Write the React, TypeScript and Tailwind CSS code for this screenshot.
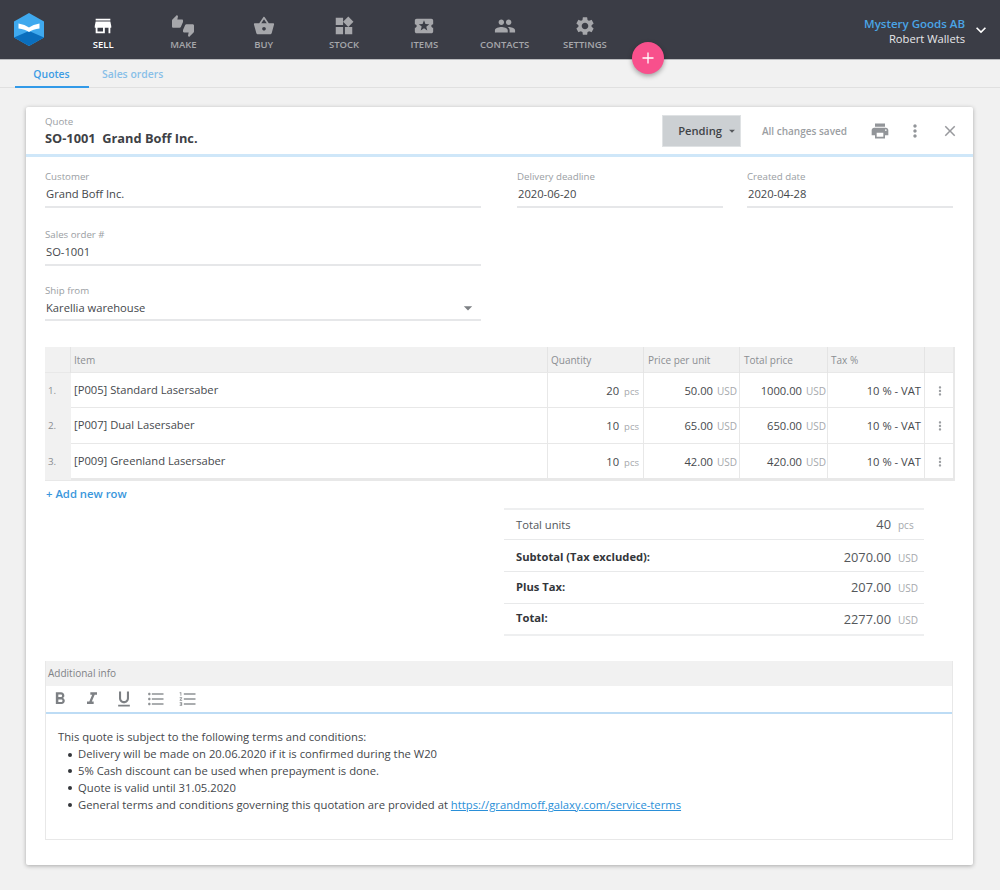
import { MdStore, MdThumbsUpDown, MdShoppingBasket, MdWidgets, MdLocalActivity, MdPeople, MdSettings, MdPrint, MdMoreVert, MdClose, MdKeyboardArrowDown, MdArrowDropDown, MdFormatBold, MdFormatItalic, MdFormatUnderlined, MdFormatListBulleted, MdFormatListNumbered } from 'react-icons/md';

const navItems = [
  { label: 'SELL', icon: MdStore, active: true },
  { label: 'MAKE', icon: MdThumbsUpDown },
  { label: 'BUY', icon: MdShoppingBasket },
  { label: 'STOCK', icon: MdWidgets },
  { label: 'ITEMS', icon: MdLocalActivity },
  { label: 'CONTACTS', icon: MdPeople },
  { label: 'SETTINGS', icon: MdSettings },
];

const rows = [
  { item: '[P005] Standard Lasersaber', qty: '20', price: '50.00', total: '1000.00' },
  { item: '[P007] Dual Lasersaber', qty: '10', price: '65.00', total: '650.00' },
  { item: '[P009] Greenland Lasersaber', qty: '10', price: '42.00', total: '420.00' },
];

const cols = 'grid grid-cols-[26px_477px_96px_96px_88px_97px_29px]';

function Field({ label, value, className }: { label: string; value: string; className: string }) {
  return (
    <div className={className}>
      <div className="pt-px text-[9.7px] leading-[14px] text-[#9a9ea3]">{label}</div>
      <div className="h-[24px] border-b-2 border-[#e6e7e9] pl-px text-[11.2px] leading-[20px] text-[#44474b]">{value}</div>
    </div>
  );
}

function TotalRow({ label, value, unit, labelClass, rowClass }: { label: string; value: string; unit: string; labelClass: string; rowClass: string }) {
  return (
    <div className={`flex items-center pl-3 ${rowClass}`}>
      <span className={`flex-1 text-[11.2px] ${labelClass}`}>{label}</span>
      <span className="text-[12.8px] text-[#54575b]">{value}</span>
      <span className="ml-[7px] mt-[2px] w-[26px] text-[10px] text-[#a5a8ac]">{unit}</span>
    </div>
  );
}

function Bullet({ children }: { children: React.ReactNode }) {
  return (
    <li className="flex items-start pl-[10px]">
      <span className="mr-[6px] mt-[6.5px] h-[4px] w-[4px] shrink-0 rounded-full bg-[#33363a]" />
      <span>{children}</span>
    </li>
  );
}

export default function App() {
  return (
    <div className="h-[890px] overflow-hidden bg-[#f1f1f1] font-['Open_Sans',sans-serif]">
      <header className="relative flex h-[60px] border-b border-[#bbbcbf] bg-[#3b3d46]">
        <div className="flex w-[63px] items-start pl-[14px] pt-[13px]">
          <svg width="30" height="33" viewBox="0 0 30 33">
            <polygon points="15,0 30,8.5 30,24.5 15,33 0,24.5 0,8.5" fill="#3fa9ee" />
            <polygon points="0,24.5 15,18 30,24.5 15,33" fill="#0a6ebd" />
            <path d="M4.5 10.5 Q11 11.5 15 14.5 Q19 11.5 25.5 10.5 L25.5 15.5 Q19 16 15 19 Q11 16 4.5 15.5 Z" fill="#fff" />
          </svg>
        </div>
        <nav className="grid grid-cols-[repeat(7,80.3px)]">
          {navItems.map(({ label, icon: Icon, active }) => (
            <div key={label} className={`flex flex-col items-center pt-[15px] ${active ? 'text-white' : 'text-[#a6a7ab]'}`}>
              <Icon size={22} />
              <span className="mt-px text-[9.5px] font-semibold leading-[14px]">{label}</span>
            </div>
          ))}
        </nav>
        <div className="ml-auto flex items-center pr-[9px]">
          <div className="pt-[2px] text-right leading-[15px]">
            <div className="text-[11.5px] font-semibold text-[#4aa5e6]">Mystery Goods AB</div>
            <div className="text-[11.2px] text-[#e8e8ea]">Robert Wallets</div>
          </div>
          <MdKeyboardArrowDown className="ml-[6px] text-white" size={20} />
        </div>
        <button className="absolute left-[632px] top-[42px] z-10 flex h-8 w-8 items-center justify-center rounded-full bg-[#f8508c] text-white shadow-[0_2px_5px_rgba(0,0,0,0.35)]">
          <svg width="12" height="12" viewBox="0 0 12 12"><path d="M6 0.5V11.5M0.5 6H11.5" stroke="#fff" strokeWidth="1.3" /></svg>
        </button>
      </header>

      <div className="flex h-[28px] border-b border-[#e0e0e0] pl-[15px]">
        <div className="-mb-px w-[74px] border-b-2 border-[#329ae8] pr-[1px] pt-[7px] text-center text-[10.4px] font-semibold text-[#3d9ce4]">Quotes</div>
        <div className="pl-[13px] pt-[7px] text-[10.4px] font-semibold text-[#88bfe8]">Sales orders</div>
      </div>

      <main className="mx-[26px] mt-[19px] h-[758px] w-[947px] rounded-[2px] bg-white shadow-[0_1px_4px_rgba(0,0,0,0.3)]">
        <div className="flex h-[50px] items-start border-b-[3px] border-[#cfe7f9] pl-[19px]">
          <div className="pt-[8px]">
            <div className="text-[9.7px] leading-[14px] text-[#9a9ea3]">Quote</div>
            <div className="text-[12.8px] font-bold leading-[18px] text-[#3e4145]">SO-1001&nbsp; Grand Boff Inc.</div>
          </div>
          <div className="ml-auto mt-[8px] flex items-center">
            <div className="flex h-[32px] w-[79px] items-center justify-end border border-[#dfe2e4] bg-[#ccd0d3] pr-[1px] text-[11.2px] font-semibold text-[#404347]">
              Pending <MdArrowDropDown size={14} className="ml-[3px] text-[#55585c]" />
            </div>
            <span className="ml-[21px] text-[10px] font-semibold text-[#9b9ea2]">All changes saved</span>
            <MdPrint size={20} className="-mt-[1px] ml-[23px] text-[#929599]" />
            <MdMoreVert size={20} className="-mt-[1px] ml-[15px] text-[#929599]" />
            <MdClose size={18} className="-mt-[1px] ml-[16px] mr-[14px] text-[#98999d]" />
          </div>
        </div>

        <div className="flex px-[19px] pt-[12px]">
          <div className="w-[436px]">
            <Field label="Customer" value="Grand Boff Inc." className="" />
            <Field label="Sales order #" value="SO-1001" className="mt-[19px]" />
            <div className="mt-[17px]">
              <div className="pt-px text-[9.7px] leading-[14px] text-[#9a9ea3]">Ship from</div>
              <div className="flex h-[23px] items-start justify-between border-b-2 border-[#e6e7e9] pl-px text-[11.2px] leading-[20px] text-[#44474b]">
                Karellia warehouse
                <MdArrowDropDown size={20} className="mr-[3px] text-[#7d8084]" />
              </div>
            </div>
          </div>
          <Field label="Delivery deadline" value="2020-06-20" className="ml-[36px] w-[206px]" />
          <Field label="Created date" value="2020-04-28" className="ml-[24px] w-[206px]" />
        </div>

        <div className="ml-[19px] mt-[26px] w-[910px] border-b-2 border-r-2 border-[#e8e8e8] text-[11.2px] text-[#46494d]">
          <div className={`${cols} h-[26px] items-stretch border-b border-[#e8e8e8] bg-[#f1f1f1] text-[10px] leading-[27px] text-[#8b8e92]`}>
            <div className="border-r border-[#e4e4e4]" />
            <div className="border-r border-[#e4e4e4] pl-[3px]">Item</div>
            <div className="border-r border-[#e4e4e4] pl-[3px]">Quantity</div>
            <div className="border-r border-[#e4e4e4] pl-[4px]">Price per unit</div>
            <div className="border-r border-[#e4e4e4] pl-[4px]">Total price</div>
            <div className="border-r border-[#e4e4e4] pl-[3px]">Tax %</div>
            <div />
          </div>
          {rows.map((r, i) => (
            <div key={r.item} className={`${cols} h-[35.4px] border-b border-[#e8e8e8] leading-[35px]`}>
              <div className="bg-[#f1f1f1] pl-[3px] text-[9.8px] text-[#8b8e92]">{i + 1}.</div>
              <div className="-mt-[1px] border-r border-[#e8e8e8] pl-[3px]">{r.item}</div>
              <div className="flex justify-end border-r border-[#e8e8e8] pr-[4px]">{r.qty}<span className="ml-[5px] pt-[1px] text-[9.5px] text-[#a5a8ac]">pcs</span></div>
              <div className="flex justify-end border-r border-[#e8e8e8] pr-[2px]">{r.price}<span className="ml-[4px] pt-[1px] text-[10px] text-[#a5a8ac]">USD</span></div>
              <div className="flex justify-end border-r border-[#e8e8e8] pr-[1px]">{r.total}<span className="ml-[4px] pt-[1px] text-[10px] text-[#a5a8ac]">USD</span></div>
              <div className="border-r border-[#e8e8e8] pr-[3px] text-right">10 % - VAT</div>
              <div className="flex items-center justify-center"><MdMoreVert size={14} className="text-[#9a9da1]" /></div>
            </div>
          ))}
        </div>

        <div className="ml-[20px] mt-[5px] text-[11.3px] font-semibold leading-[16px] text-[#3a97dc]">+ Add new row</div>

        <div className="ml-[478px] mt-[6px] w-[420px] border-t-2 border-[#eeeff0]">
          <TotalRow label="Total units" value="40" unit="pcs" labelClass="mt-[2px] text-[#54575b]" rowClass="h-[30px] border-b border-[#e8e9ea]" />
          <TotalRow label="Subtotal (Tax excluded):" value="2070.00" unit="USD" labelClass="font-bold text-[#33363a]" rowClass="h-[32px] border-b border-[#e8e9ea] pt-[4px]" />
          <TotalRow label="Plus Tax:" value="207.00" unit="USD" labelClass="-mt-[1px] font-bold text-[#33363a]" rowClass="h-[32px] border-b border-[#e8e9ea]" />
          <TotalRow label="Total:" value="2277.00" unit="USD" labelClass="-mt-[1px] font-bold text-[#33363a]" rowClass="h-[32px] border-b-2 border-[#eeeff0]" />
        </div>

        <div className="ml-[19px] mt-[25px] w-[908px] border border-t-0 border-[#e8e8e8]">
          <div className="h-[25px] bg-[#f1f1f1] pl-[2px] text-[10px] leading-[24px] text-[#7f8286]">Additional info</div>
          <div className="flex h-[28px] items-center gap-[12px] border-b-2 border-[#bddcf5] pl-[4px] text-[#7d8084]">
            <MdFormatBold size={20} />
            <MdFormatItalic size={20} />
            <MdFormatUnderlined size={20} />
            <MdFormatListBulleted size={20} className="text-[#8f9295]" />
            <MdFormatListNumbered size={20} className="text-[#8f9295]" />
          </div>
          <div className="h-[125px] pl-[12px] pt-[15px] text-[11.25px] leading-[16.9px] text-[#44474b]">
            <div>This quote is subject to the following terms and conditions:</div>
            <ul>
              <Bullet>Delivery will be made on 20.06.2020 if it is confirmed during the W20</Bullet>
              <Bullet>5% Cash discount can be used when prepayment is done.</Bullet>
              <Bullet>Quote is valid until 31.05.2020</Bullet>
              <Bullet>General terms and conditions governing this quotation are provided at <a className="text-[#2a8fd8] underline">https://grandmoff.galaxy.com/service-terms</a></Bullet>
            </ul>
          </div>
        </div>
      </main>
    </div>
  );
}
